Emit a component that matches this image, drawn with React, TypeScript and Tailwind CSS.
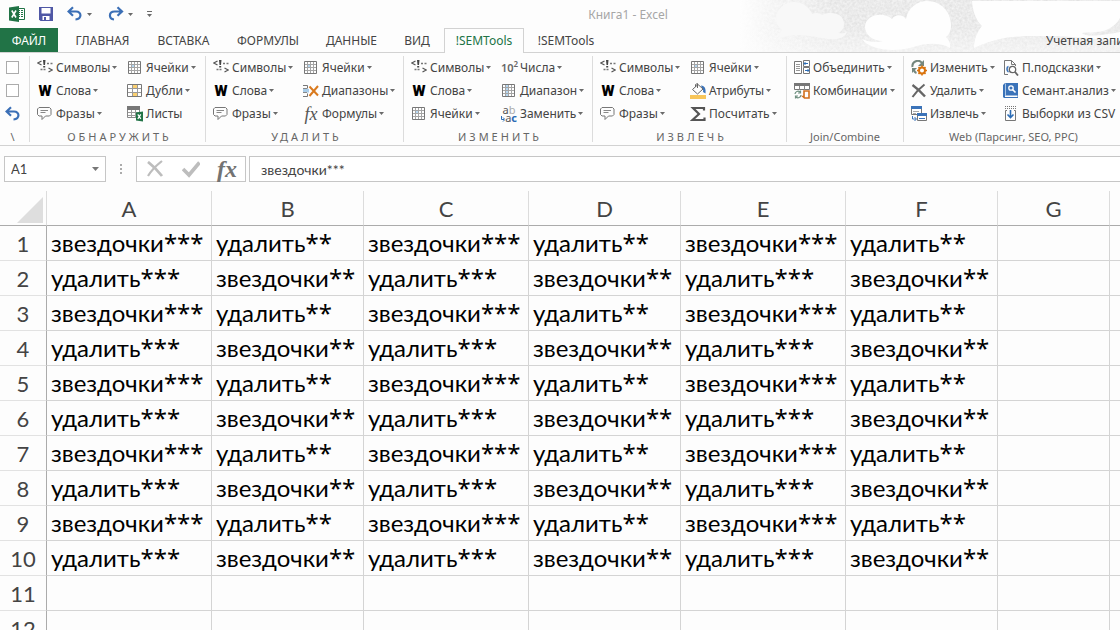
import React from "react";

const UI = "font-['Noto_Sans','Open_Sans',sans-serif]";
const SHEET = "font-['Lato','Carlito','Noto_Sans',sans-serif]";

function Svg({ children, w = 16, h = 16 }: { children: React.ReactNode; w?: number; h?: number }) {
  return (
    <svg width={w} height={h} viewBox={`0 0 ${w} ${h}`} fill="none" className="block shrink-0" aria-hidden="true">
      {children}
    </svg>
  );
}

function Caret() {
  return (
    <svg width="5" height="3" viewBox="0 0 5 3" className="block shrink-0" aria-hidden="true">
      <path d="M0 0h5L2.500 3z" fill="#6a6a6a" />
    </svg>
  );
}

const SymbolsIcon = () => (
  <Svg>
    <path d="M4.500 1 .8 3l3.700 2" stroke="#555" strokeWidth="1.200" />
    <path d="M6 0h2.500L8 5H6.500zM6.200 6h2v1.600h-2z" fill="#444" />
    <path d="M10 3.500h2M13.500 3.500h2M3.500 9.500h2M6.500 9.500h2" stroke="#777" strokeWidth="1.300" />
    <path d="M11.500 8l3.700 2-3.700 2" stroke="#555" strokeWidth="1.200" />
  </Svg>
);

const WordsIcon = () => (
  <span className="block w-4 font-['Roboto','Noto_Sans',sans-serif] text-[15px] leading-4 font-black text-black" aria-hidden="true">
    W
  </span>
);

const PhraseIcon = () => (
  <Svg>
    <path d="M2 1.500h10.500l1.500 1.500v5.500L12.500 10H8.500L5 13.500V10H2L.5 8.500V3z" stroke="#777" />
    <path d="M3.500 4.500h7.500M3.500 6.500h5" stroke="#888" />
  </Svg>
);

function GridIcon({ mode = "cell" }: { mode?: "cell" | "column" }) {
  return (
    <Svg>
      <path d="M1.500 1.500h12v12h-12z" fill="#fff" stroke="#777" />
      {mode === "cell" ? (
        <path d="M4 4h4v4H4z" fill="#b5d7f2" />
      ) : (
        <path d="M5 2h3v11H5z" fill="#b5d7f2" />
      )}
      <path d="M4.500 2v11M7.500 2v11M10.500 2v11M2 4.500h11M2 7.500h11M2 10.500h11" stroke="#a5a5a5" />
    </Svg>
  );
}

const DuplicatesIcon = () => (
  <Svg>
    <path d="M.5 1.500h14v12H.5z" fill="#fff" stroke="#777" />
    <path d="M5 2h5v3H5zM5 10h5v3H5z" fill="#fbd071" />
    <path d="M5.500 2v11M10.500 2v11M1 5.500h13M1 9.500h13" stroke="#999" />
  </Svg>
);

const SheetsIcon = () => (
  <Svg>
    <path d="M.5 .5h12v11H.5z" fill="#fff" stroke="#888" />
    <path d="M0 0h13v4H0z" fill="#777" />
    <path d="M4.500 4v7M8.500 4v7M1 6.500h11M1 9.500h11" stroke="#999" />
    <path d="M9 6.500l7-1v10l-7-1z" fill="#217346" />
    <path d="M10.800 8.300l3 4.500M13.800 8.300l-3 4.500" stroke="#fff" strokeWidth="1.200" />
  </Svg>
);

const RangesDeleteIcon = () => (
  <Svg>
    <path d="M0 2.500h4.500v3M0 13.500h4.500v-3" stroke="#777" />
    <path d="M0 6h6v3.500H0z" fill="#a9cdea" />
    <path d="M0 5.500h4M0 9.500h4" stroke="#888" />
    <path d="M6.500 3.500l8.500 9M15 3l-8.500 10" stroke="#d97a1e" strokeWidth="2" />
  </Svg>
);

const FxIcon = ({ big = false }: { big?: boolean }) => (
  <span
    className={
      big
        ? "block font-['Liberation_Serif',serif] text-[24px] leading-6 font-bold text-[#737373] italic"
        : "block w-4 text-center font-['Liberation_Serif',serif] text-[18px] leading-4 text-[#555] italic"
    }
    aria-hidden="true"
  >
    fx
  </span>
);

const PowerIcon = () => (
  <span className="flex w-4 items-start text-[11px] leading-4 font-semibold text-[#666]" aria-hidden="true">
    10<span className="text-[8px] leading-2">2</span>
  </span>
);

const ReplaceIcon = () => (
  <span className="flex h-4 w-4 flex-col text-[11px] leading-2 text-[#555]" aria-hidden="true">
    <span>
      a<span className="text-[#aaa]">b</span>
    </span>
    <span className="flex justify-end">
      <Svg w={4} h={8}>
        <path d="M.5 2v3.500H3M2 3.500l2 2-2 2" stroke="#2b6cb5" />
      </Svg>
      a<span className="font-bold text-[#2b6cb5]">c</span>
    </span>
  </span>
);

const FillIcon = () => (
  <Svg>
    <path d="M11 2.500c4 .5 5 3 4.500 8l-2.500-1.500c.5-2 0-3-1-3.500z" fill="#3b73b9" />
    <path d="M2.500 6.500L8 1.500l5 4.500-5.500 5z" fill="#fff" stroke="#666" />
    <path d="M5.500 4V1.500L7.500 .5V5" stroke="#666" />
    <path d="M0 12h16v4H0z" fill="#f8c65a" />
  </Svg>
);

const SigmaIcon = () => (
  <Svg>
    <path d="M14 4.500V2H3L9 8l-6.500 6H14.500v-2.500" stroke="#555" strokeWidth="2.200" />
  </Svg>
);

const MergeIcon = () => (
  <Svg>
    <path d="M.5 1.500h7v12h-7z" fill="#fff" stroke="#777" />
    <path d="M2 4.500h4M2 6.500h4M2 8.500h4M2 10.500h4" stroke="#999" />
    <path d="M9.500 .5h6v6h-6zM9.500 7.500h6v6h-6z" fill="#fff" stroke="#777" />
    <path d="M10 3.500h4M11.500 2l-1.500 1.500L11.500 5M11 10.500h4M13.500 9l1.500 1.500-1.500 1.500" stroke="#2b6cb5" />
  </Svg>
);

const CombineIcon = () => (
  <Svg>
    <path d="M.5 .5h15v6H.5z" fill="#fff" stroke="#777" />
    <path d="M0 0h16v3H0z" fill="#777" />
    <path d="M5.500 3v4M10.500 3v4" stroke="#888" />
    <path d="M1 11a3 3 0 0 1 5-2M6.500 7.500v2.500H4M7 12a3 3 0 0 1-5 2M1.500 15.500V13H4" stroke="#6f9080" strokeWidth="1.200" />
    <path d="M10 8h5v7h-4.500l-1.500-1.500h1z" fill="#fff" stroke="#d1701c" strokeWidth="1.600" />
  </Svg>
);

const WebEditIcon = () => (
  <Svg>
    <path d="M1.500 7A5.300 5.300 0 0 1 11 3M3 9.500c0 2 1 3 2.500 3.500" stroke="#75877e" strokeWidth="2" />
    <path d="M13 0v6H7z" fill="#75877e" />
    <path d="M1 8h5l-5 5z" fill="#75877e" />
    <circle cx="11" cy="10.500" r="3" stroke="#d9730d" strokeWidth="2" />
    <path d="M11 5.500v2M11 13.500v2M6 10.500h2M14 10.500h2M7.500 7l1.500 1.500M13 12.500l1.500 1.500M14.500 7L13 8.500M9 12.500L7.500 14" stroke="#d9730d" strokeWidth="1.600" />
  </Svg>
);

const DeleteIcon = () => (
  <Svg>
    <path d="M1.500 2C5 4.500 10 9 14 13.500" stroke="#666" strokeWidth="2.400" />
    <path d="M13.500 1.500C9 5 4.500 9.500 1.500 14" stroke="#666" strokeWidth="2" />
  </Svg>
);

const ExtractIcon = () => (
  <Svg>
    <path d="M.5 .5h10v8H.5z" fill="#fff" stroke="#777" />
    <path d="M0 0h11v3H0z" fill="#3b73b9" />
    <path d="M2 5.500h6M2 7.500h3" stroke="#aaa" />
    <path d="M6.500 7.500h9v7h-9z" fill="#fff" stroke="#777" />
    <path d="M6 7h10v3H6z" fill="#3b73b9" />
    <path d="M8 12.500h6M1.500 10v3H5M3.500 11l2 2-2 2" stroke="#3b73b9" />
  </Svg>
);

const HintsIcon = () => (
  <Svg>
    <path d="M5 14.500H1.500V.5h7l4 4V6M8.500 .5v4h4" stroke="#777" />
    <circle cx="9.500" cy="9.500" r="3.200" fill="#fff" stroke="#666" strokeWidth="1.300" />
    <path d="M12 12l3 3.500" stroke="#666" strokeWidth="1.800" />
    <path d="M5.500 6.500C3.500 7 3.500 11 5.500 12" stroke="#3b73b9" strokeWidth="1.600" />
  </Svg>
);

const SemanticIcon = () => (
  <Svg>
    <path d="M0 2L2 0h13v15H1l-1-1z" fill="#3b73b9" />
    <path d="M2.500 .5v12" stroke="#a9c6e6" />
    <path d="M2 12.500h12.500V14H2z" fill="#fff" />
    <circle cx="8" cy="5" r="2.200" stroke="#fff" strokeWidth="1.300" />
    <path d="M9.500 6.500l3 3" stroke="#fff" strokeWidth="1.600" />
  </Svg>
);

const CsvIcon = () => (
  <Svg>
    <path d="M2 .5h12M2 2.500h12" stroke="#777" strokeDasharray="1 1" />
    <path d="M4 4.500H2.500v10h10v-10H11" stroke="#777" />
    <path d="M7.500 4v8M4.500 8.500l3 3 3-3" stroke="#2b6cb5" strokeWidth="1.600" />
  </Svg>
);

function UndoIcon({ flip = false }: { flip?: boolean }) {
  return (
    <Svg>
      <path
        d={flip ? "M13 5.500H6.500C.5 5.500 .5 13 6 13.500M9.500 1.300L14 5.500 9.500 9.700" : "M2 5.500h7c6 0 6 7.500-.5 8M6 1.300L1.500 5.500 6 9.700"}
        stroke="#3b6fb6"
        strokeWidth="2.200"
      />
    </Svg>
  );
}

const ExcelIcon = () => (
  <Svg>
    <path d="M8 2.500h7.500v11H8z" fill="#fff" stroke="#217346" />
    <path d="M9 4.500h2M12 4.500h2M9 6.500h2M12 6.500h2M9 8.500h2M12 8.500h2M9 10.500h2M12 10.500h2" stroke="#217346" />
    <path d="M0 1.500L10 0v16L0 14.500z" fill="#217346" />
    <path d="M2.800 4.500l4.200 7M7 4.500l-4.200 7" stroke="#fff" strokeWidth="1.600" />
  </Svg>
);

const SaveIcon = () => (
  <Svg>
    <path d="M1 1h14v14H2.500L1 13.500z" fill="#4f57a5" />
    <path d="M3.500 2h9v5.500h-9zM4.500 10h7v4h-7z" fill="#fff" />
    <path d="M6 11h2v3H6z" fill="#4f57a5" />
  </Svg>
);

type Item = { icon: React.ReactNode; text: string; menu?: boolean };
type Group = { label: string; width: string; columns: Item[][]; spaced?: boolean; wide?: boolean };

const symbols: Item = { icon: <SymbolsIcon />, text: "Символы", menu: true };
const words: Item = { icon: <WordsIcon />, text: "Слова", menu: true };
const phrases: Item = { icon: <PhraseIcon />, text: "Фразы", menu: true };
const cells: Item = { icon: <GridIcon />, text: "Ячейки", menu: true };

const groups: Group[] = [
  {
    label: "ОБНАРУЖИТЬ",
    width: "w-[176px]",
    spaced: true,
    columns: [
      [symbols, words, phrases],
      [cells, { icon: <DuplicatesIcon />, text: "Дубли", menu: true }, { icon: <SheetsIcon />, text: "Листы" }],
    ],
  },
  {
    label: "УДАЛИТЬ",
    width: "w-[198px]",
    spaced: true,
    columns: [
      [symbols, words, phrases],
      [cells, { icon: <RangesDeleteIcon />, text: "Диапазоны", menu: true }, { icon: <FxIcon />, text: "Формулы", menu: true }],
    ],
  },
  {
    label: "ИЗМЕНИТЬ",
    width: "w-[189px]",
    spaced: true,
    columns: [
      [symbols, words, cells],
      [
        { icon: <PowerIcon />, text: "Числа", menu: true },
        { icon: <GridIcon mode="column" />, text: "Диапазон", menu: true },
        { icon: <ReplaceIcon />, text: "Заменить", menu: true },
      ],
    ],
  },
  {
    label: "ИЗВЛЕЧЬ",
    width: "w-[194px]",
    spaced: true,
    columns: [
      [symbols, words, phrases],
      [cells, { icon: <FillIcon />, text: "Атрибуты", menu: true }, { icon: <SigmaIcon />, text: "Посчитать", menu: true }],
    ],
  },
  {
    label: "Join/Combine",
    width: "w-[117px]",
    columns: [
      [
        { icon: <MergeIcon />, text: "Объединить", menu: true },
        { icon: <CombineIcon />, text: "Комбинации", menu: true },
      ],
    ],
  },
  {
    label: "Web (Парсинг, SEO, PPC)",
    width: "w-[220px]",
    wide: true,
    columns: [
      [
        { icon: <WebEditIcon />, text: "Изменить", menu: true },
        { icon: <DeleteIcon />, text: "Удалить", menu: true },
        { icon: <ExtractIcon />, text: "Извлечь", menu: true },
      ],
      [
        { icon: <HintsIcon />, text: "П.подсказки", menu: true },
        { icon: <SemanticIcon />, text: "Семант.анализ", menu: true },
        { icon: <CsvIcon />, text: "Выборки из CSV" },
      ],
    ],
  },
];

function RibbonGroup({ group }: { group: Group }) {
  return (
    <section className={`flex shrink-0 flex-col border-l border-[#dcdcdc] ${group.width}`}>
      <div className="flex h-[69px] pl-[7px]">
        {group.columns.map((items, i) => (
          <div key={i} className={i === 0 && group.columns.length > 1 ? (group.wide ? "w-[92px]" : "w-[90px]") : ""}>
            {items.map((item) => (
              <button key={item.text} type="button" className="flex h-[23px] items-center gap-[2px] whitespace-nowrap">
                {item.icon}
                <span className="pl-px">{item.text}</span>
                {item.menu && <Caret />}
              </button>
            ))}
          </div>
        ))}
      </div>
      <h2
        className={`flex h-[17px] items-end justify-center text-[11px] leading-[10px] whitespace-nowrap text-[#666] ${group.spaced ? "pl-1 tracking-[3px]" : ""}`}
      >
        {group.label}
      </h2>
    </section>
  );
}

const tabs = [
  { text: "ГЛАВНАЯ", width: "w-[83px]" },
  { text: "ВСТАВКА", width: "w-[79px]" },
  { text: "ФОРМУЛЫ", width: "w-[90px]" },
  { text: "ДАННЫЕ", width: "w-[77px]" },
  { text: "ВИД", width: "w-[54px]" },
  { text: "!SEMTools", width: "w-[80px]", active: true },
  { text: "!SEMTools", width: "w-[84px]" },
];

const columns = [
  { name: "A", width: "w-[165px]" },
  { name: "B", width: "w-[152px]" },
  { name: "C", width: "w-[165px]" },
  { name: "D", width: "w-[152px]" },
  { name: "E", width: "w-[165px]" },
  { name: "F", width: "w-[152px]" },
  { name: "G", width: "w-[112px]" },
  { name: "", width: "w-[112px]" },
];

function CellText({ row, col }: { row: number; col: number }) {
  if (row > 10 || col > 5) return null;
  return (
    <>
      {(row + col) % 2 === 1 ? "звездочки" : "удалить"}
      <span className="font-['Noto_Sans',sans-serif]">{col % 2 === 0 ? "***" : "**"}</span>
    </>
  );
}

function Clouds() {
  return (
    <svg
      className="pointer-events-none absolute top-0 right-0"
      width="380"
      height="52"
      viewBox="0 0 380 52"
      aria-hidden="true"
    >
      <defs>
        <linearGradient id="sky" x1="0" x2="1">
          <stop offset="0" stopColor="#fdfdfd" />
          <stop offset=".1" stopColor="#f0f0f0" />
          <stop offset=".25" stopColor="#e2e2e2" />
          <stop offset="1" stopColor="#e2e2e2" />
        </linearGradient>
        <linearGradient id="fade" x1="0" y1="0" x2="0" y2="1">
          <stop offset=".5" stopColor="#fdfdfd" stopOpacity="0" />
          <stop offset="1" stopColor="#fdfdfd" stopOpacity=".5" />
        </linearGradient>
        <filter id="grain" x="0" y="0" width="1" height="1" colorInterpolationFilters="sRGB">
          <feTurbulence type="fractalNoise" baseFrequency=".4" numOctaves="2" />
          <feColorMatrix values="0 0 0 0 1  0 0 0 0 1  0 0 0 0 1  1 0 0 0 -.2" />
        </filter>
      </defs>
      <path d="M0 0h380v52H0z" fill="url(#sky)" />
      <path d="M0 0h380v52H0z" filter="url(#grain)" />
      <path d="M0 0h380v52H0z" fill="url(#fade)" />
      <path
        d="M36 20C36 9 44 2 54 2c9 0 15 5 18 12 4-2 8-1 10 1 9-4 22-2 22 9 0 5-3 8-6 9 4 1 7 0 9-1-2 6-10 8-19 7-17-3-32-7-49-1 0-4 1-6 3-8-4-3-6-7-6-10z"
        fill="#f8f8f8"
      />
      <path
        d="M125 27c0-12 18-16 27-8 4-6 11-4 14 0C168 8 177 1 187 1c14 0 24 11 24 24 0 6-2 10-5 12 3 3 5 7 4 11-10-6-25-5-40 0-18 4-40 2-48-9 6 3 15 4 21 2-11 0-18-7-18-14z"
        fill="#fefefe"
      />
      <path
        d="M232 1h148v17c-4 8-14 14-25 14-4 1-9 0-13 1 3 4 20 3 38-1v9c-35-3-52-5-77-5-26 0-43 0-69 12 0-8 3-16 8-22-5-5-9-12-10-25z"
        fill="#fefefe"
      />
    </svg>
  );
}

function Titlebar() {
  const caret = <Caret />;
  return (
    <div className="grid h-7 grid-cols-[1fr_auto_1fr] items-center">
      <div className="flex items-center pl-[9px]">
        <ExcelIcon />
        <button type="button" aria-label="Сохранить" className="ml-[13px]">
          <SaveIcon />
        </button>
        <button type="button" aria-label="Отменить" className="ml-[13px] flex items-center gap-1">
          <UndoIcon />
          {caret}
        </button>
        <button type="button" aria-label="Вернуть" className="ml-4 flex items-center gap-1">
          <UndoIcon flip />
          {caret}
        </button>
        <button type="button" aria-label="Настройка панели" className="ml-[14px] flex flex-col items-center gap-[2px]">
          <span className="h-px w-[5px] bg-[#6a6a6a]" />
          {caret}
        </button>
      </div>
      <h1 className="pt-[2px] pl-[136px] text-[12px] text-[#a6a6a6]">Книга1 - Excel</h1>
      <div />
    </div>
  );
}

export default function App() {
  return (
    <div className={`flex h-screen min-h-0 flex-col overflow-hidden bg-[#fdfdfd] text-[12px] text-[#444] ${UI}`}>
      <header className="relative shrink-0">
        <Clouds />
        <div className="relative">
          <Titlebar />
          <nav className="flex h-[25px] items-stretch border-b border-[#d2d2d2]">
            <button type="button" className="w-[58px] bg-[#217346] pt-px text-white">
              ФАЙЛ
            </button>
            <div className="ml-[3px] flex">
              {tabs.map((tab, i) => (
                <button
                  key={i}
                  type="button"
                  className={`${tab.width} ${tab.active ? "-mb-px border border-b-0 border-[#d2d2d2] bg-[#fdfdfd] text-[#217346]" : "pt-[2px]"}`}
                >
                  {tab.text}
                </button>
              ))}
            </div>
            <a href="#account" className="ml-auto w-[74px] overflow-hidden pt-px leading-6 whitespace-nowrap">
              Учетная запись
            </a>
          </nav>
        </div>
      </header>

      <div className="flex shrink-0 overflow-hidden border-b border-[#d2d2d2] pt-[3px] pb-[3px]">
        <div className="flex w-[29px] shrink-0 flex-col items-center pr-1">
          <label className="flex h-[23px] items-center">
            <input type="checkbox" aria-label="Параметр 1" className="block size-[13px] appearance-none border border-[#ababab] bg-white" />
          </label>
          <label className="flex h-[23px] items-center">
            <input type="checkbox" aria-label="Параметр 2" className="block size-[13px] appearance-none border border-[#ababab] bg-white" />
          </label>
          <button type="button" aria-label="Отменить действие" className="flex h-[23px] items-center">
            <UndoIcon />
          </button>
          <span className="flex h-[17px] items-end text-[11px] leading-[10px] text-[#666]">\</span>
        </div>
        {groups.map((group) => (
          <RibbonGroup key={group.label} group={group} />
        ))}
      </div>

      <div className="flex shrink-0 items-center pt-[10px] pb-[9px] pl-1">
        <div className="flex h-[26px] w-[102px] items-center border border-[#c6c6c6] bg-white pr-[6px] pl-[6px]">
          <input aria-label="Имя ячейки" defaultValue="A1" className={`min-w-0 flex-1 bg-transparent pt-[2px] text-[13px] outline-none ${SHEET}`} />
          <svg width="7" height="4" viewBox="0 0 7 4" aria-hidden="true">
            <path d="M0 0h7L3.500 4z" fill="#777" />
          </svg>
        </div>
        <svg width="30" height="12" viewBox="0 0 30 12" aria-hidden="true">
          <path d="M14 1h2v2h-2zM14 5h2v2h-2zM14 9h2v2h-2z" fill="#ababab" />
        </svg>
        <div className="flex h-[26px] w-[110px] items-center justify-between border border-[#c6c6c6] bg-white pr-[8px] pl-[9px]">
          <button type="button" aria-label="Отмена">
            <Svg w={18} h={18}>
              <path d="M2 2c4 3 10 9 14 14" stroke="#bdbdbd" strokeWidth="2.800" />
              <path d="M16 1C11 5 5 11 2 16" stroke="#bdbdbd" strokeWidth="2.200" />
            </Svg>
          </button>
          <button type="button" aria-label="Ввод">
            <Svg w={18} h={18}>
              <path d="M1 9l6 6L17.500 2.500" stroke="#bdbdbd" strokeWidth="3.600" />
            </Svg>
          </button>
          <button type="button" aria-label="Вставить функцию">
            <FxIcon big />
          </button>
        </div>
        <input
          aria-label="Строка формул"
          defaultValue="звездочки***"
          className={`ml-[3px] h-[26px] min-w-0 flex-1 border border-r-0 border-[#c6c6c6] bg-white pl-[11px] text-[14px] outline-none ${SHEET}`}
        />
      </div>

      <main className="min-h-0 flex-1 overflow-hidden">
        <table className={`w-max table-fixed border-separate border-spacing-0 ${SHEET}`}>
          <thead>
            <tr className="h-[35px]">
              <th className="w-[47px] border-r border-b border-r-[#dcdcdc] border-b-[#ababab] p-0">
                <svg width="26" height="26" viewBox="0 0 26 26" className="mt-1 ml-[17px] block" aria-label="Выделить всё">
                  <path d="M26 0v26H0z" fill="#dedede" />
                </svg>
              </th>
              {columns.map((column, i) => (
                <th
                  key={i}
                  scope="col"
                  className={`border-r border-b border-r-[#dcdcdc] border-b-[#ababab] p-0 pt-[2px] text-[22px] leading-8 font-normal ${column.width}`}
                >
                  {column.name}
                </th>
              ))}
            </tr>
          </thead>
          <tbody>
            {Array.from({ length: 12 }, (_, r) => (
              <tr key={r} className="h-[35px]">
                <th
                  scope="row"
                  className="border-r border-b border-r-[#ababab] border-b-[#e2e2e2] p-0 pt-[2px] text-[22px] leading-8 font-normal"
                >
                  {r + 1}
                </th>
                {columns.map((column, c) => (
                  <td
                    key={c}
                    className="border-r border-b border-[#d4d4d4] p-0 pl-1 text-[24px] leading-[34px] whitespace-nowrap text-black"
                  >
                    <CellText row={r + 1} col={c} />
                  </td>
                ))}
              </tr>
            ))}
          </tbody>
        </table>
      </main>
    </div>
  );
}
